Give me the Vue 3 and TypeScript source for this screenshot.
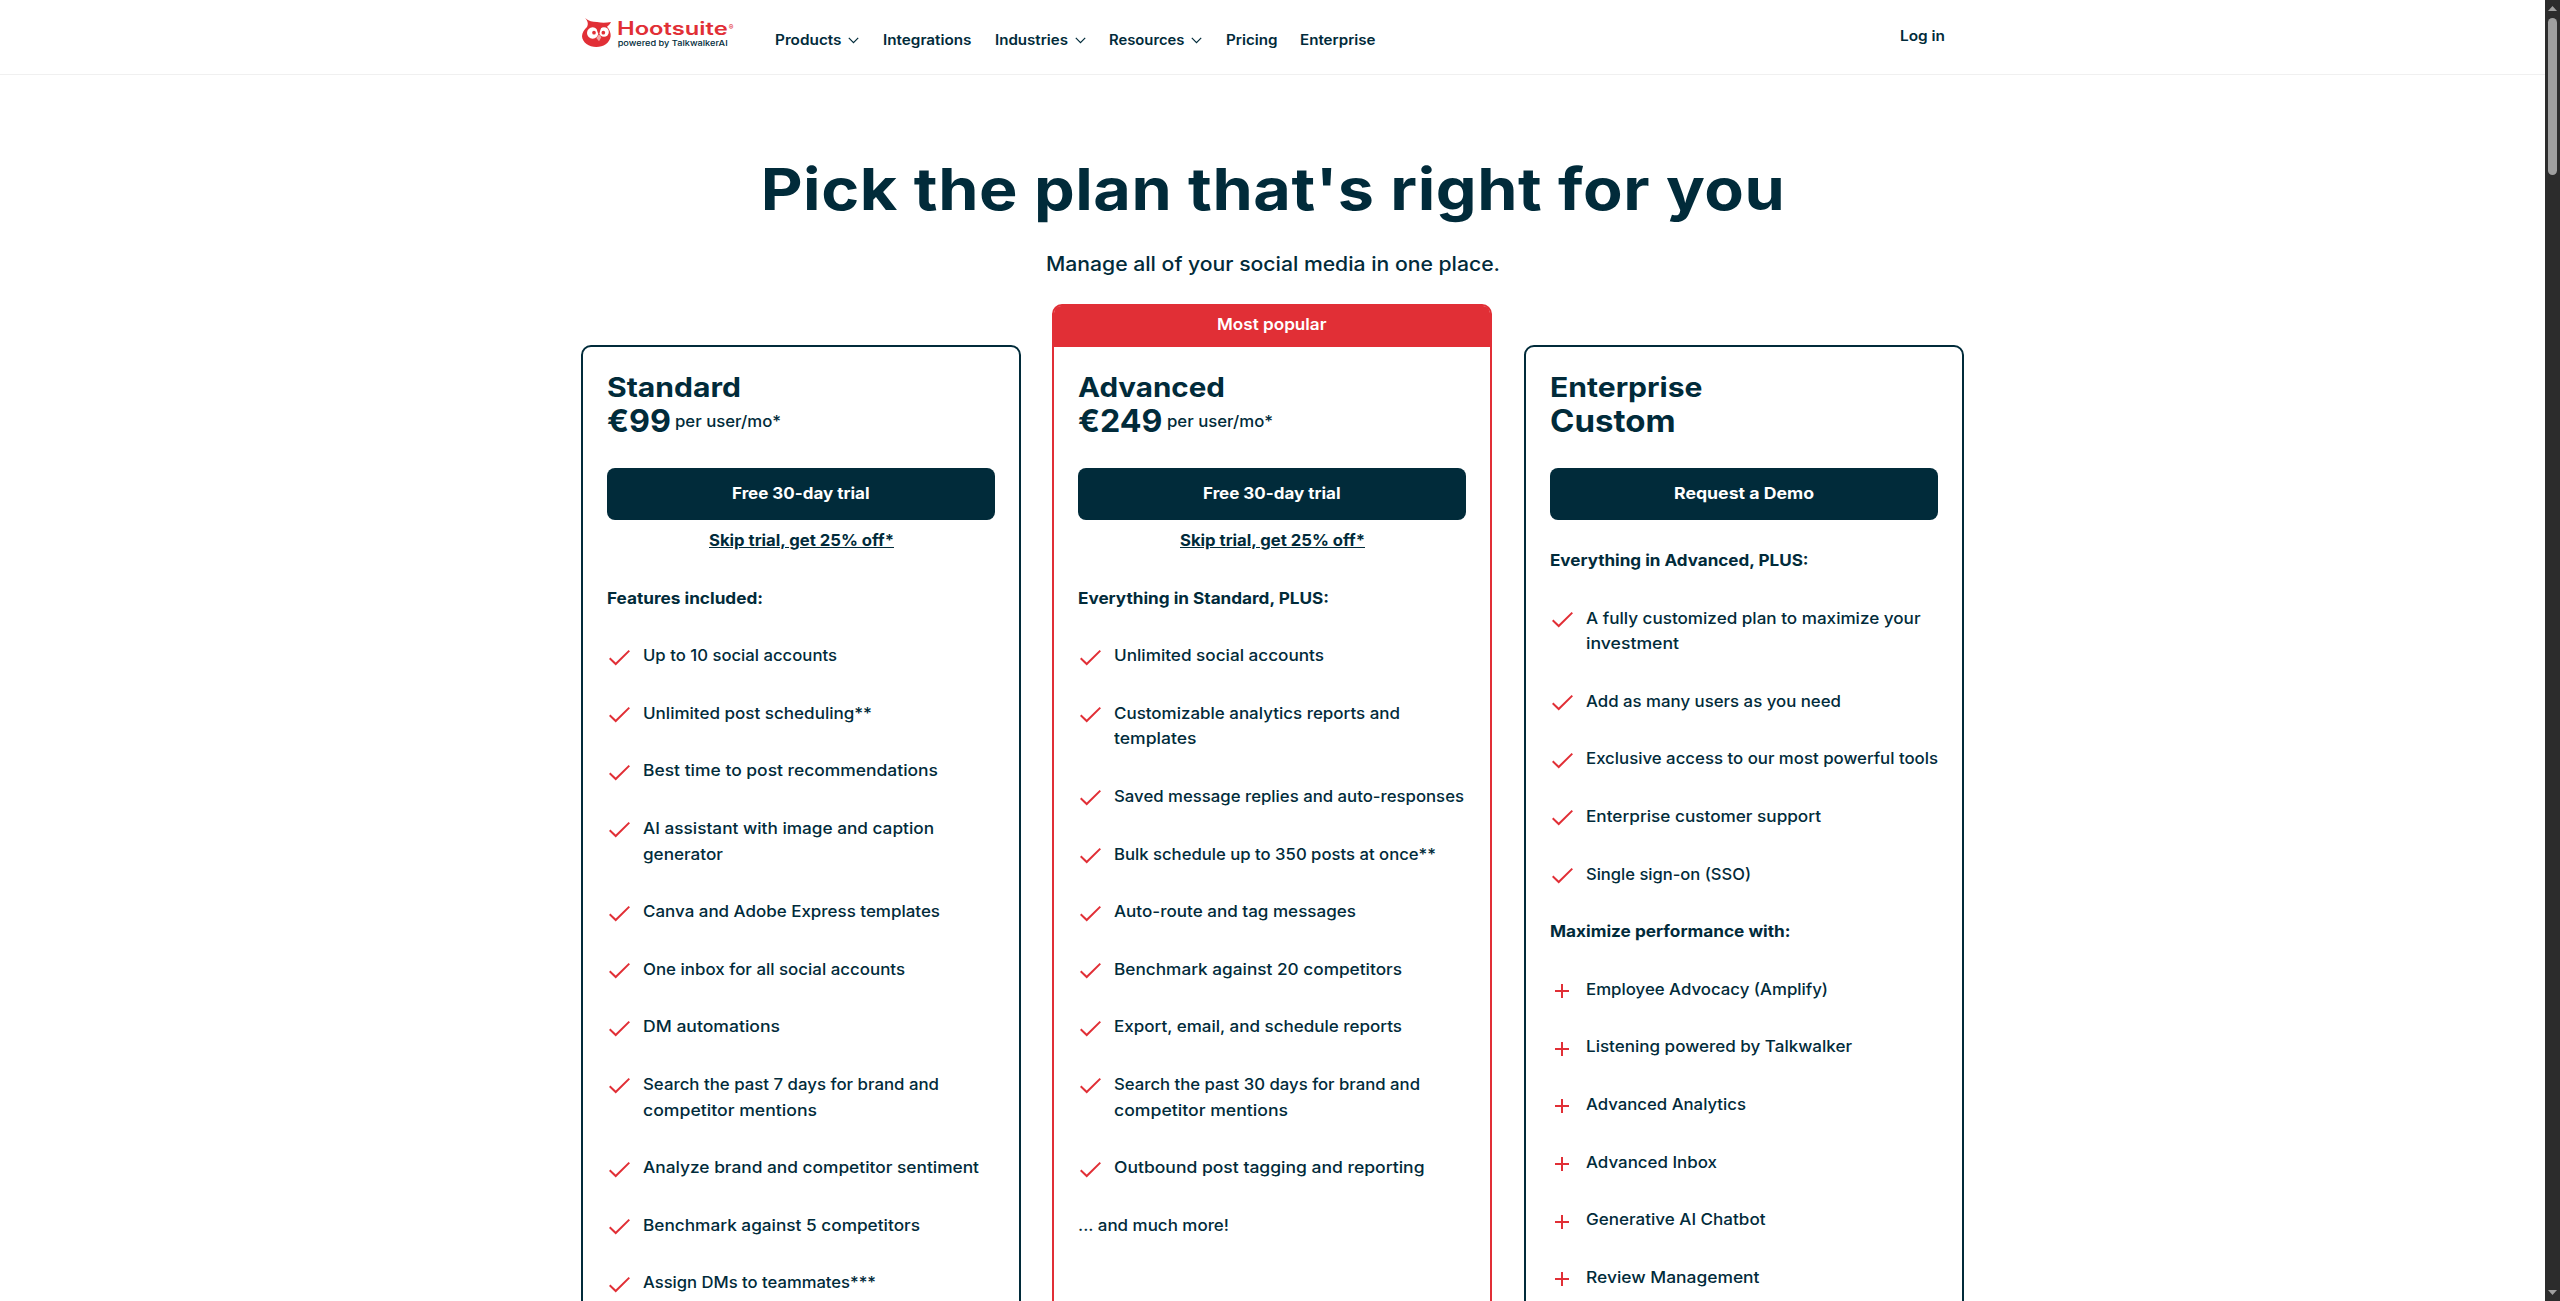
<script setup lang="ts">
import { ref } from 'vue'

interface NavItem {
  label: string
  menu?: boolean
}

interface FeatureGroup {
  heading: string
  icon: 'check' | 'plus'
  items: string[]
}

interface Plan {
  name: string
  price: string
  unit?: string
  badge?: string
  cta: string
  skip?: string
  groups: FeatureGroup[]
  more?: string
}

const navItems: NavItem[] = [
  { label: 'Products', menu: true },
  { label: 'Integrations' },
  { label: 'Industries', menu: true },
  { label: 'Resources', menu: true },
  { label: 'Pricing' },
  { label: 'Enterprise' }
]

const plans = ref<Plan[]>([
  {
    name: 'Standard',
    price: '€99',
    unit: 'per user/mo*',
    cta: 'Free 30-day trial',
    skip: 'Skip trial, get 25% off*',
    groups: [
      {
        heading: 'Features included:',
        icon: 'check',
        items: [
          'Up to 10 social accounts',
          'Unlimited post scheduling**',
          'Best time to post recommendations',
          'AI assistant with image and caption\ngenerator',
          'Canva and Adobe Express templates',
          'One inbox for all social accounts',
          'DM automations',
          'Search the past 7 days for brand and\ncompetitor mentions',
          'Analyze brand and competitor sentiment',
          'Benchmark against 5 competitors',
          'Assign DMs to teammates***'
        ]
      }
    ]
  },
  {
    name: 'Advanced',
    price: '€249',
    unit: 'per user/mo*',
    badge: 'Most popular',
    cta: 'Free 30-day trial',
    skip: 'Skip trial, get 25% off*',
    groups: [
      {
        heading: 'Everything in Standard, PLUS:',
        icon: 'check',
        items: [
          'Unlimited social accounts',
          'Customizable analytics reports and\ntemplates',
          'Saved message replies and auto-responses',
          'Bulk schedule up to 350 posts at once**',
          'Auto-route and tag messages',
          'Benchmark against 20 competitors',
          'Export, email, and schedule reports',
          'Search the past 30 days for brand and\ncompetitor mentions',
          'Outbound post tagging and reporting'
        ]
      }
    ],
    more: '... and much more!'
  },
  {
    name: 'Enterprise',
    price: 'Custom',
    cta: 'Request a Demo',
    groups: [
      {
        heading: 'Everything in Advanced, PLUS:',
        icon: 'check',
        items: [
          'A fully customized plan to maximize your\ninvestment',
          'Add as many users as you need',
          'Exclusive access to our most powerful tools',
          'Enterprise customer support',
          'Single sign-on (SSO)'
        ]
      },
      {
        heading: 'Maximize performance with:',
        icon: 'plus',
        items: [
          'Employee Advocacy (Amplify)',
          'Listening powered by Talkwalker',
          'Advanced Analytics',
          'Advanced Inbox',
          'Generative AI Chatbot',
          'Review Management'
        ]
      }
    ]
  }
])

// Set widths of the text lines, in px
const lineWidths: Record<string, number> = {
  'Up to 10 social accounts': 193,
  'Unlimited post scheduling**': 228,
  'Best time to post recommendations': 294,
  'AI assistant with image and caption': 290,
  'generator': 79,
  'Canva and Adobe Express templates': 296,
  'One inbox for all social accounts': 261,
  'DM automations': 136,
  'Search the past 7 days for brand and': 295,
  'competitor mentions': 173,
  'Analyze brand and competitor sentiment': 335,
  'Benchmark against 5 competitors': 276,
  'Assign DMs to teammates***': 232,
  'Unlimited social accounts': 209,
  'Customizable analytics reports and': 285,
  'templates': 81.5,
  'Saved message replies and auto-responses': 349,
  'Bulk schedule up to 350 posts at once**': 321,
  'Auto-route and tag messages': 241,
  'Benchmark against 20 competitors': 287,
  'Export, email, and schedule reports': 287,
  'Search the past 30 days for brand and': 305,
  'Outbound post tagging and reporting': 309.5,
  '... and much more!': 150,
  'A fully customized plan to maximize your': 333.5,
  'investment': 92,
  'Add as many users as you need': 254,
  'Exclusive access to our most powerful tools': 351,
  'Enterprise customer support': 234,
  'Single sign-on (SSO)': 164,
  'Employee Advocacy (Amplify)': 241,
  'Listening powered by Talkwalker': 265,
  'Advanced Analytics': 159,
  'Advanced Inbox': 130,
  'Generative AI Chatbot': 178.5,
  'Review Management': 172.5,
  'Features included:': 155,
  'Everything in Standard, PLUS:': 250,
  'Everything in Advanced, PLUS:': 257.5,
  'Maximize performance with:': 239.5,
  'Standard': 133,
  'Advanced': 146,
  'Enterprise': 151.5,
  '€99': 63,
  '€249': 83.5,
  'Custom': 124.5,
  'per user/mo*': 105,
  'Free 30-day trial': 136.5,
  'Request a Demo': 139,
  'Skip trial, get 25% off*': 184,
  'Most popular': 108.5,
  'Manage all of your social media in one place.': 453
}

const navWidths: Record<string, number> = {
  'Products': 65.5,
  'Integrations': 87.5,
  'Industries': 72,
  'Resources': 74.5,
  'Pricing': 50.5,
  'Enterprise': 74.5,
  'Log in': 44
}

// Stretch a line to its set width, the margin takes up the difference
const fit = (el: HTMLElement, widths: Record<string, number>) => {
  const width = widths[(el.textContent ?? '').trim()]
  if (!width) return
  const natural = el.getBoundingClientRect().width
  const target = width + 1
  el.style.transform = `scaleX(${(target / natural).toFixed(4)})`
  el.style.marginRight = `${(target - natural).toFixed(2)}px`
}

const vFit = {
  mounted: (el: HTMLElement) => fit(el, lineWidths)
}

const vFitNav = {
  mounted: (el: HTMLElement) => fit(el, navWidths)
}
</script>

<template>
  <div class="app">
    <div class="page">
      <header class="header">
        <div class="header-inner">
          <a class="logo">
            <svg width="154" height="34" viewBox="30 48 462 102">
              <path
                class="owl"
                d="M42 54 C54 63 64 66 78 66 C94 69 106 68 120 66 C117 73 113 77 108 80 C115 87 120 99 119 109 C116 130 97 141 76 141 C54 141 34 128 33 109 C33 98 40 88 48 81 C53 72 50 62 42 54 Z"
              />
              <circle class="eye" cx="65" cy="99" r="17" />
              <circle class="eye" cx="99" cy="96" r="14.5" />
              <path class="owl" d="M74 78 L92 78 L85 100 L81 100 Z" />
              <circle class="owl" cx="69" cy="98" r="5.5" />
              <circle class="owl" cx="97" cy="98" r="5.5" />
              <path class="beak" d="M84 103 L91 112 L84 124 L76 114 Z" />
              <text class="brand" x="138" y="105" textLength="332" lengthAdjust="spacingAndGlyphs">Hootsuite</text>
              <text class="registered" x="473" y="90">®</text>
              <text class="tagline" x="140" y="137" textLength="330" lengthAdjust="spacingAndGlyphs">powered by TalkwalkerAI</text>
            </svg>
          </a>
          <nav class="nav">
            <a v-for="item in navItems" :key="item.label" class="nav-item">
              <span v-fit-nav class="line">{{ item.label }}</span>
              <svg v-if="item.menu" class="chevron" width="11" height="7" viewBox="0 0 11 7">
                <path d="M0.8 0.9 L5.5 5.7 L10.2 0.9" />
              </svg>
            </a>
          </nav>
          <a class="login"><span v-fit-nav class="line">Log in</span></a>
        </div>
      </header>

      <main class="main">
        <h1 class="title">Pick the plan that's right for you</h1>
        <p class="subtitle"><span v-fit class="line">Manage all of your social media in one place.</span></p>

        <div class="plans">
          <section v-for="plan in plans" :key="plan.name" class="plan" :class="{ popular: plan.badge }">
            <div v-if="plan.badge" class="badge"><span v-fit class="line">{{ plan.badge }}</span></div>
            <div class="plan-body">
              <h2 class="plan-name"><span v-fit class="line">{{ plan.name }}</span></h2>
              <div class="plan-price">
                <span v-fit class="line amount">{{ plan.price }}</span>
                <span v-if="plan.unit" v-fit class="line unit">{{ plan.unit }}</span>
              </div>
              <button class="cta"><span v-fit class="line">{{ plan.cta }}</span></button>
              <a v-if="plan.skip" class="skip"><span v-fit class="line">{{ plan.skip }}</span></a>
              <div class="groups" :class="{ compact: !plan.skip }">
                <template v-for="group in plan.groups" :key="group.heading">
                  <h3 class="group-heading"><span v-fit class="line">{{ group.heading }}</span></h3>
                  <div v-for="item in group.items" :key="item" class="feature">
                    <svg v-if="group.icon === 'check'" class="mark" width="24" height="24" viewBox="0 0 24 24">
                      <path d="M2.7 13.3 L8.7 19 L22.3 5.6" />
                    </svg>
                    <svg v-else class="mark" width="24" height="24" viewBox="0 0 24 24">
                      <path d="M5 13 H19 M12 6 V20" />
                    </svg>
                    <div class="feature-text">
                      <span v-for="line in item.split('\n')" :key="line" v-fit class="line">{{ line }}</span>
                    </div>
                  </div>
                </template>
                <p v-if="plan.more" class="more"><span v-fit class="line">{{ plan.more }}</span></p>
              </div>
            </div>
          </section>
        </div>
      </main>
    </div>

    <div class="scrollbar">
      <svg width="9" height="5" viewBox="0 0 9 5"><path d="M4.5 0 L9 5 H0 Z" /></svg>
      <div class="thumb"></div>
      <svg width="9" height="5" viewBox="0 0 9 5"><path d="M0 0 H9 L4.5 5 Z" /></svg>
    </div>
  </div>
</template>

<style>
body {
  margin: 0;
  background: #fff;
}
</style>

<style scoped>
* {
  box-sizing: border-box;
}

.app {
  display: flex;
  height: 100vh;
  overflow: hidden;
  color: #012b3a;
  font-family: Inter, 'Open Sans', sans-serif;
  font-size: 16px;
  line-height: 25.6px;
  white-space: nowrap;
}

.page {
  flex: 1;
  height: 100%;
  overflow: hidden;
}

.line {
  display: inline-block;
  vertical-align: top;
  transform-origin: left center;
}

.header {
  height: 75px;
  border-bottom: 1px solid #f0f0f0;
}

.header-inner {
  display: flex;
  width: 1384px;
  margin: 0 auto;
  padding-top: 16px;
}

.logo {
  width: 154px;
  height: 34px;
}

.logo svg {
  display: block;
}

.owl {
  fill: #e12f36;
}

.eye {
  fill: #fff;
}

.beak {
  fill: #f3a5a6;
}

.brand {
  fill: #e12f36;
  font-size: 54px;
  font-weight: 600;
}

.registered {
  fill: #e12f36;
  font-size: 21px;
  font-weight: 600;
}

.tagline {
  fill: #012b3a;
  font-size: 23px;
  font-weight: 500;
}

.nav {
  display: flex;
  gap: 23.3px;
  margin-left: 40.5px;
  padding-top: 12px;
  font-size: 14px;
  font-weight: 600;
  line-height: 24px;
}

.nav-item {
  display: flex;
  align-items: center;
  gap: 7px;
}

.chevron path {
  fill: none;
  stroke: #012b3a;
  stroke-width: 1.2;
}

.login {
  margin-left: auto;
  margin-right: 20px;
  padding-top: 8px;
  font-size: 14px;
  font-weight: 600;
  line-height: 24px;
}

.main {
  width: 1384px;
  margin: 0 auto;
  padding-top: 79px;
}

.title {
  margin: 0;
  font-size: 58px;
  font-weight: 700;
  line-height: 70px;
  letter-spacing: 0.5px;
  text-align: center;
  transform: scaleX(1.115);
}

.subtitle {
  margin: 25px 0 0;
  font-size: 20px;
  font-weight: 500;
  line-height: 30px;
  text-align: center;
}

.plans {
  display: grid;
  grid-template-columns: 440px 441px 440px;
  gap: 31px;
  margin-top: 25px;
  margin-left: 0.5px;
}

.plan {
  width: 440px;
  height: 1100px;
  margin-top: 41px;
  border: 2px solid #012b3a;
  border-radius: 10px;
}

.popular {
  margin-top: 0;
  height: 1141px;
  border-color: #e12f36;
}

.badge {
  height: 41px;
  padding-top: 6px;
  background: #e12f36;
  color: #fff;
  font-weight: 600;
  text-align: center;
  border-radius: 7px 7px 0 0;
}

.plan-body {
  padding: 24px;
}

.plan-name {
  margin: 0;
  font-size: 27px;
  font-weight: 700;
  line-height: 34px;
}

.plan-price {
  display: flex;
  align-items: center;
  gap: 4px;
  height: 34px;
}

.amount {
  padding-bottom: 2px;
  font-size: 31px;
  font-weight: 700;
  line-height: 34px;
}

.unit {
  font-weight: 500;
}

.cta {
  display: block;
  width: 100%;
  height: 52px;
  margin: 29px 0 0;
  padding: 0 0 2px;
  border: none;
  border-radius: 8px;
  background: #012b3a;
  color: #fff;
  font-family: inherit;
  font-size: 16px;
  font-weight: 700;
}

.skip {
  display: block;
  margin-top: 8px;
  font-weight: 700;
  text-align: center;
}

.skip .line {
  text-decoration: underline;
}

.groups {
  display: flex;
  flex-direction: column;
  gap: 32px;
  margin-top: 32px;
}

.compact {
  margin-top: 28px;
}

.group-heading {
  margin: 0;
  font-size: 16px;
  font-weight: 700;
}

.feature {
  display: flex;
  gap: 11.5px;
  font-weight: 500;
}

.mark {
  flex: none;
  margin-top: 1.4px;
}

.mark path {
  fill: none;
  stroke: #e12f36;
  stroke-width: 2;
}

.feature-text {
  display: flex;
  flex-direction: column;
  align-items: flex-start;
}

.more {
  margin: 0;
  font-weight: 500;
}

.scrollbar {
  display: flex;
  flex-direction: column;
  align-items: center;
  width: 15px;
  height: 100%;
  padding: 6px 0;
  background: #2c2c2c;
}

.scrollbar svg {
  fill: #9f9f9f;
}

.scrollbar svg:last-child {
  margin-top: auto;
}

.thumb {
  width: 9px;
  height: 157px;
  margin-top: 7px;
  border-radius: 5px;
  background: #9f9f9f;
}
</style>
